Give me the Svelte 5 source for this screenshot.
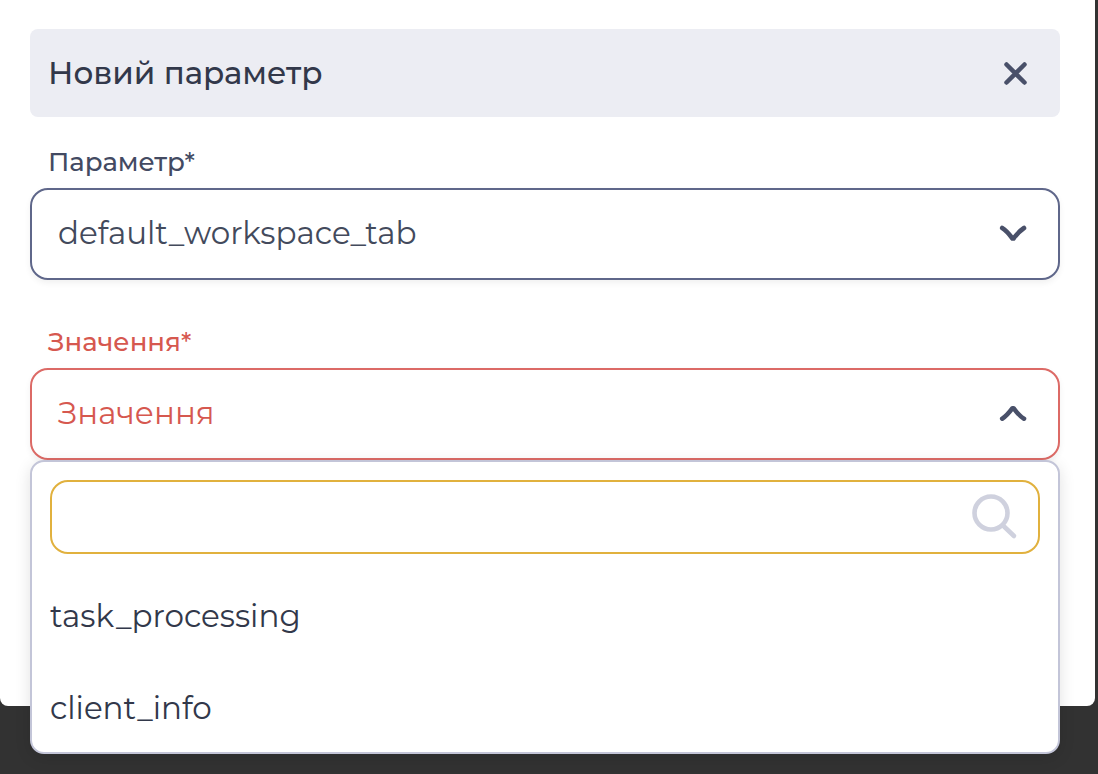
<script lang="ts">
  const params = ['default_workspace_tab'];
  const values = ['task_processing', 'client_info'];

  let visible = $state(true);
  let param = $state('default_workspace_tab');
  let value = $state('');
  let search = $state('');
  let open = $state(true);

  let filtered = $derived(values.filter((v) => v.includes(search.trim().toLowerCase())));

  function choose(v: string) {
    value = v;
    search = '';
    open = false;
  }
</script>

<div class="backdrop">
  {#if visible}
    <section class="modal">
      <header class="modal-header">
        <h2>Новий параметр</h2>
        <button type="button" class="close-btn" aria-label="Закрити" onclick={() => (visible = false)}>
          <svg viewBox="0 0 24 24" width="24" height="24" fill="none" stroke="currentColor" stroke-width="4.500" stroke-linecap="round">
            <path d="M3.500 3.500l18 18M21.500 3.500L3.500 21.500" />
          </svg>
        </button>
      </header>

      <div class="field">
        <label for="param">Параметр*</label>
        <div class="control">
          <select id="param" class="box" bind:value={param}>
            {#each params as p}
              <option value={p}>{p}</option>
            {/each}
          </select>
          <svg class="chevron" viewBox="0 0 28 18" width="28" height="18" fill="none" stroke="currentColor" stroke-width="4.600" stroke-linecap="round" stroke-linejoin="round">
            <path d="M3.200 3C7.500 5.500 10.500 9.500 13.500 13.500H14.500C17.500 9.500 20.500 6 25 3" />
          </svg>
        </div>
      </div>

      <div class="field" class:invalid={!value}>
        <label for="value">Значення*</label>
        <div class="control">
          <button
            type="button"
            id="value"
            class="box"
            aria-haspopup="listbox"
            aria-expanded={open}
            onclick={() => (open = !open)}
          >
            {value || 'Значення'}
          </button>
          <svg class="chevron" class:down={!open} viewBox="0 0 28 18" width="28" height="18" fill="none" stroke="currentColor" stroke-width="4.600" stroke-linecap="round" stroke-linejoin="round">
            <path d="M3.200 13.700C7.500 11.200 10.500 7.200 13.500 3.200H14.500C17.500 7.200 20.500 11.200 25 13.700" />
          </svg>

          {#if open}
            <div class="menu">
              <div class="search">
                <input type="text" aria-label="Пошук" bind:value={search} />
                <svg viewBox="0 0 48 48" width="48" height="48" fill="none" stroke="currentColor" stroke-linecap="round">
                  <circle cx="21" cy="20" r="16.500" stroke-width="4.600" />
                  <path d="M33 32.500L44 43" stroke-width="4.600" />
                </svg>
              </div>
              <ul>
                {#each filtered as v}
                  <li>
                    <button type="button" class="option" onclick={() => choose(v)}>{v}</button>
                  </li>
                {/each}
              </ul>
            </div>
          {/if}
        </div>
      </div>
    </section>
  {/if}
</div>

<style>
  :global(body) {
    background: #323232;
  }

  .backdrop {
    min-height: 100vh;
    background: #323232;
    font-family: Montserrat, Inter, 'Noto Sans', sans-serif;
    color: #32384a;
  }

  .modal {
    box-sizing: border-box;
    margin-right: 3px;
    padding: 29px 35px 246px 30px;
    background: #fff;
    border-radius: 0 0 8px 8px;
  }

  .modal-header {
    display: flex;
    align-items: center;
    justify-content: space-between;
    height: 88px;
    padding: 0 33px 0 18px;
    margin-bottom: 28px;
    box-sizing: border-box;
    background: #ecedf3;
    border-radius: 8px;
  }

  h2 {
    margin: 0;
    font-size: 31px;
    line-height: 40px;
    font-weight: 500;
  }

  button,
  input,
  select {
    font: inherit;
    color: inherit;
  }

  .close-btn {
    display: flex;
    padding: 0;
    border: none;
    background: none;
    color: #495069;
    cursor: pointer;
  }

  .field + .field {
    margin-top: 45px;
  }

  label {
    display: block;
    height: 43px;
    padding-left: 18px;
    font-size: 26px;
    line-height: 34px;
    font-weight: 500;
    color: #434a62;
  }

  .control {
    position: relative;
  }

  .box {
    display: block;
    box-sizing: border-box;
    width: 100%;
    height: 92px;
    padding: 0 80px 3px 26px;
    border: 2px solid #5f678a;
    border-radius: 18px;
    background: #fff;
    box-shadow: 0 3px 6px rgba(0, 0, 0, 0.06);
    font-size: 31px;
    text-align: left;
    color: #434a5c;
    appearance: none;
    cursor: pointer;
  }

  .chevron {
    position: absolute;
    top: 37px;
    right: 33px;
    color: #495069;
    pointer-events: none;
  }

  .chevron.down {
    transform: rotate(180deg);
  }

  .invalid label,
  .invalid .box {
    color: #d6584f;
  }

  .invalid .box {
    border-color: #dc6a66;
  }

  .menu {
    position: absolute;
    top: 100%;
    left: 0;
    right: 0;
    padding: 18px 18px 0;
    border: 2px solid #c3c5d8;
    border-radius: 14px;
    background: #fff;
    box-shadow: 0 4px 16px rgba(0, 0, 0, 0.12);
  }

  .search {
    display: flex;
    align-items: center;
    box-sizing: border-box;
    height: 74px;
    padding: 0 20px;
    margin-bottom: 14px;
    border: 2px solid #e1b13e;
    border-radius: 18px;
    color: #cfd1de;
  }

  .search input {
    flex: 1;
    min-width: 0;
    border: none;
    outline: none;
    background: none;
    font-size: 31px;
    color: #32384a;
  }

  ul {
    margin: 0;
    padding: 0;
    list-style: none;
  }

  .option {
    display: block;
    width: 100%;
    height: 92px;
    padding: 3px 0 0;
    border: none;
    background: none;
    font-size: 31px;
    text-align: left;
    cursor: pointer;
  }
</style>
